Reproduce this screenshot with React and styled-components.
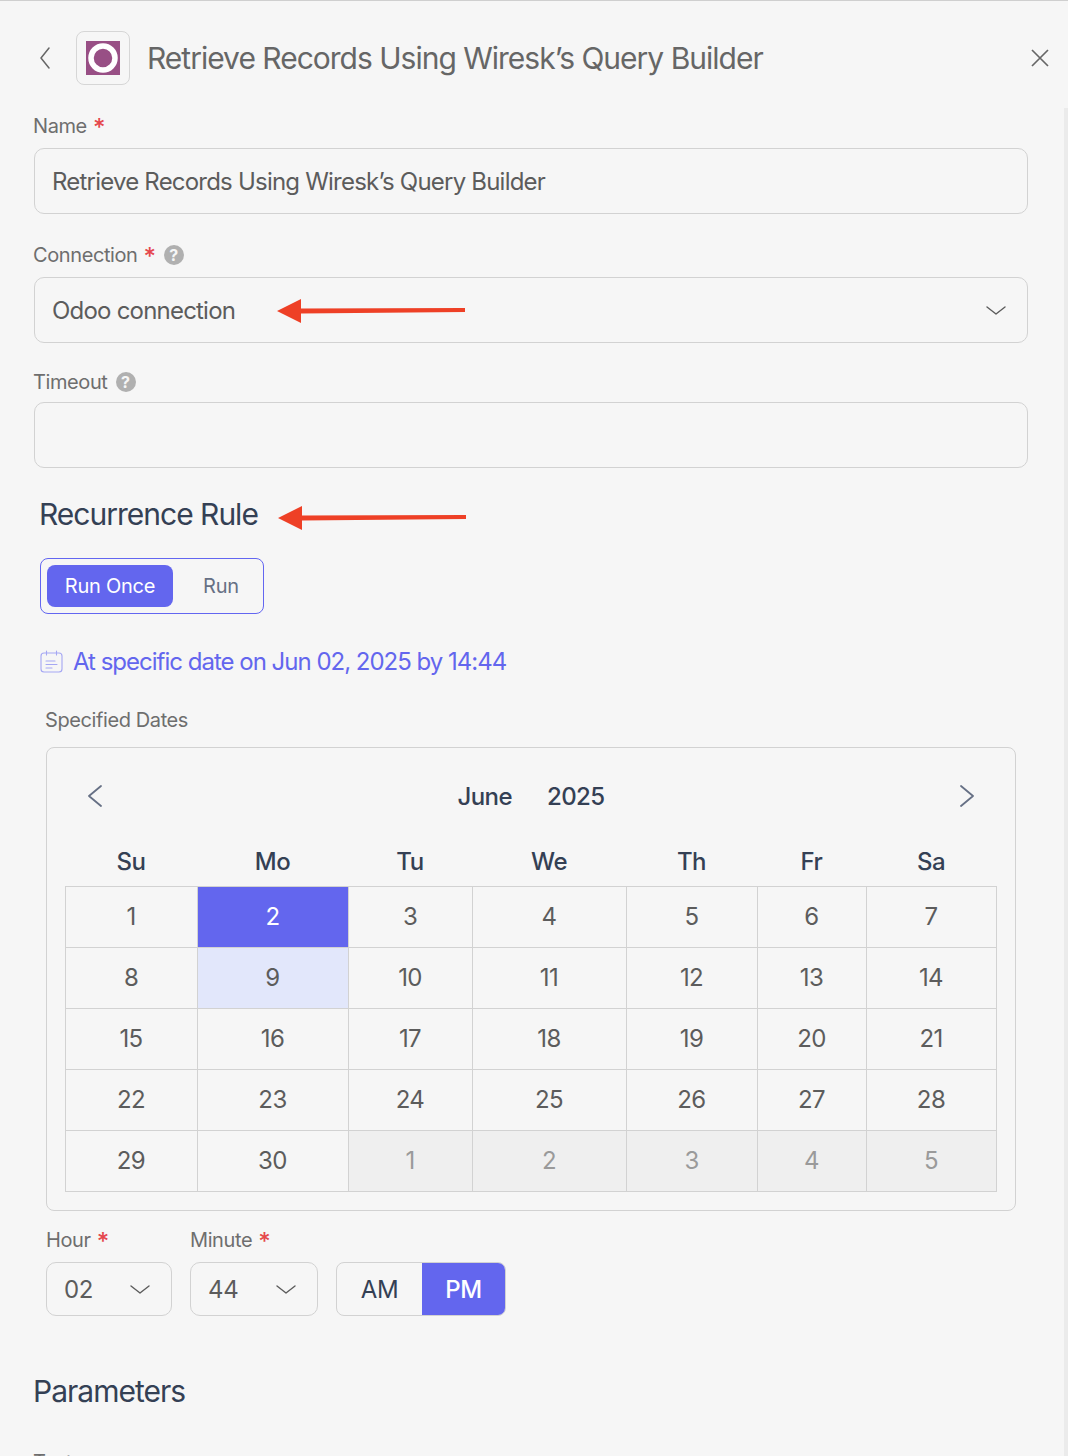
import React from "react";
import styled, { createGlobalStyle } from "styled-components";

const Global = createGlobalStyle`
  html, body { margin: 0; padding: 0; background: #f6f6f6; height: 100%; overflow: hidden; }
  * { box-sizing: border-box; }
  body { font-family: Inter, "Liberation Sans", sans-serif; color: #5c5c5c; }
`;

const Page = styled.div`
  position: relative;
  width: 1068px;
  height: 1456px;
  overflow: hidden;
  background: #f6f6f6;
  border-top: 1px solid #cfcfcf;
`;
const ScrollTrack = styled.div`
  position: absolute;
  right: 0;
  top: 107px;
  bottom: 0;
  width: 4px;
  background: #ebebeb;
`;
const Header = styled.header`
  display: flex;
  align-items: center;
  height: 54px;
  margin-top: 30px;
  padding: 0 19px 0 39px;
`;
const BackBtn = styled.button`
  display: flex;
  width: 16px;
  padding: 0;
  border: 0;
  background: none;
  color: #666;
`;
const LogoBox = styled.div`
  display: flex;
  align-items: center;
  justify-content: center;
  width: 54px;
  height: 54px;
  margin-left: 21px;
  border: 1px solid #d6d6d6;
  border-radius: 8px;
`;
const Title = styled.h1`
  flex: 1;
  margin: 0 0 0 17px;
  font-size: 30px;
  font-weight: 400;
  color: #666;
  letter-spacing: -1px;
  white-space: nowrap;
`;
const CloseBtn = styled.button`
  display: flex;
  padding: 0;
  border: 0;
  background: none;
  color: #666;
`;
const Form = styled.main`
  display: flex;
  flex-direction: column;
  padding: 0 40px 0 34px;
`;
const Label = styled.label`
  display: flex;
  align-items: center;
  height: 24px;
  margin-left: ${p => p.$left ?? -1}px;
  font-size: 20px;
  color: #6e6e6e;
  letter-spacing: -0.4px;
  margin-top: ${p => p.$top || 0}px;
  margin-bottom: ${p => p.$bottom || 0}px;
`;
const Star = styled.span`
  color: #e5484d;
  font-size: 24px;
  font-weight: 500;
  margin-left: 6px;
  line-height: 24px;
  position: relative;
  top: 2px;
`;
const Help = styled.span`
  display: inline-flex;
  align-items: center;
  justify-content: center;
  width: 20px;
  height: 20px;
  margin-left: 8px;
  border-radius: 50%;
  background: #b0b0b0;
  color: #f6f6f6;
  font-size: 16px;
  font-weight: 700;
  letter-spacing: 0;
`;
const Field = styled.div`
  display: flex;
  align-items: center;
  justify-content: space-between;
  height: 66px;
  padding: 0 20px 0 17px;
  border: 1px solid #d2d2d2;
  border-radius: 10px;
  font-size: 24px;
  color: #5c5c5c;
  letter-spacing: -0.79px;
`;
const SectionTitle = styled.h2`
  margin: ${p => p.$top}px 0 0 ${p => p.$left || 0}px;
  height: 38px;
  line-height: 38px;
  font-size: 30px;
  font-weight: 400;
  color: #344054;
  letter-spacing: -1px;
`;
const Toggle = styled.div`
  display: flex;
  align-items: center;
  width: 224px;
  height: 56px;
  margin: 25px 0 0 6px;
  padding: 0 0 0 6px;
  border: 1px solid #6366f1;
  border-radius: 8px;
`;
const ToggleOption = styled.div`
  display: flex;
  flex: none;
  align-items: center;
  justify-content: center;
  width: ${p => p.$w}px;
  height: 42px;
  border-radius: 8px;
  font-size: 20px;
  letter-spacing: -0.25px;
  color: ${p => (p.$active ? "#fff" : "#667085")};
  background: ${p => (p.$active ? "#6366ee" : "transparent")};
`;
const DateLine = styled.div`
  display: flex;
  align-items: center;
  gap: 10px;
  height: 30px;
  margin: 32px 0 0 6px;
  font-size: 24px;
  letter-spacing: -1px;
  color: #6366ee;
`;
const Indented = styled.div`
  margin-left: 12px;
`;
const CalendarBox = styled.section`
  width: 970px;
  height: 464px;
  padding: 0 18px;
  border: 1px solid #d2d2d2;
  border-radius: 8px;
`;
const CalNav = styled.div`
  display: flex;
  align-items: center;
  justify-content: space-between;
  height: 96px;
  padding: 0 22px;
`;
const NavBtn = styled.button`
  display: flex;
  padding: 0;
  border: 0;
  background: none;
  color: #667085;
`;
const Month = styled.div`
  display: flex;
  gap: 35px;
  font-size: 24px;
  font-weight: 500;
  color: #344054;
  letter-spacing: -0.6px;
`;
const DayHead = styled.div`
  display: grid;
  grid-template-columns: 132px 151px 124px 154px 131px 109px 130px;
  height: 42px;
  padding-bottom: 8px;
  align-items: center;
`;
const DayName = styled.div`
  text-align: center;
  font-size: 24px;
  font-weight: 500;
  color: #344054;
  letter-spacing: -0.5px;
`;
const DayGrid = styled.div`
  display: grid;
  grid-template-columns: 132px 151px 124px 154px 131px 109px 130px;
  grid-auto-rows: 61px;
  width: 932px;
  border-top: 1px solid #d2d2d2;
  border-left: 1px solid #d2d2d2;
`;
const Day = styled.div`
  display: flex;
  align-items: center;
  justify-content: center;
  padding: 0 1px 2px 0;
  border-right: 1px solid #d2d2d2;
  border-bottom: 1px solid #d2d2d2;
  font-size: 24px;
  letter-spacing: -0.6px;
  color: ${p => (p.$kind === "selected" ? "#fff" : p.$kind === "muted" ? "#9a9a9a" : "#5c5c5c")};
  background: ${p =>
    p.$kind === "selected" ? "#6366ee" : p.$kind === "range" ? "#e2e7fb" : p.$kind === "muted" ? "#efefef" : "transparent"};
`;
const TimeRow = styled.div`
  display: flex;
  align-items: flex-end;
  margin: 17px 0 0 12px;
`;
const TimeField = styled.div`
  display: flex;
  flex-direction: column;
  margin-right: 18px;
`;
const MiniSelect = styled.div`
  display: flex;
  align-items: center;
  justify-content: space-between;
  width: ${p => p.$w}px;
  height: 54px;
  margin-top: 10px;
  padding: 0 20px 0 17px;
  border: 1px solid #d2d2d2;
  border-radius: 10px;
  font-size: 24px;
  letter-spacing: -0.3px;
  color: #5c5c5c;
`;
const AmPm = styled.div`
  display: flex;
  height: 54px;
  border: 1px solid #d2d2d2;
  border-radius: 8px;
  overflow: hidden;
`;
const AmPmOption = styled.div`
  display: flex;
  align-items: center;
  justify-content: center;
  width: ${p => p.$w}px;
  font-size: 24px;
  letter-spacing: -0.4px;
  font-weight: ${p => (p.$active ? 500 : 400)};
  color: ${p => (p.$active ? "#fff" : "#344054")};
  background: ${p => (p.$active ? "#6366ee" : "transparent")};
`;
const ArrowMark = styled.svg`
  position: absolute;
  left: ${p => p.$x}px;
  top: ${p => p.$y}px;
`;

const ChevronDown = () => (
  <svg width="22" height="22" viewBox="0 0 22 22" fill="none" stroke="currentColor" strokeWidth="1.4" strokeLinecap="round" strokeLinejoin="round">
    <path d="M2 8l9 7 9-7" />
  </svg>
);
const ChevronSide = ({ dir, w = 16, h = 22, sw = 1.8 }) => {
  const mid = h / 2;
  const d =
    dir === "left"
      ? `M${w - 2} 1L2 ${mid}L${w - 2} ${h - 1}`
      : `M2 1L${w - 2} ${mid}L2 ${h - 1}`;
  return (
    <svg width={w} height={h} viewBox={`0 0 ${w} ${h}`} fill="none" stroke="currentColor" strokeWidth={sw} strokeLinecap="round" strokeLinejoin="round">
      <path d={d} />
    </svg>
  );
};

const Arrow = ({ x, y }) => (
  <ArrowMark $x={x} $y={y} width="192" height="28" viewBox="0 0 192 28">
    <path d="M0 14L24 2V11.5L188 11V15L24 16.5V26Z" fill="#ee4026" />
  </ArrowMark>
);

const weeks = [
  [1, 2, 3, 4, 5, 6, 7],
  [8, 9, 10, 11, 12, 13, 14],
  [15, 16, 17, 18, 19, 20, 21],
  [22, 23, 24, 25, 26, 27, 28],
  [29, 30, 1, 2, 3, 4, 5],
];
const dayKind = (w, i) => {
  if (w === 0 && i === 1) return "selected";
  if (w === 1 && i === 1) return "range";
  if (w === 4 && i > 1) return "muted";
  return undefined;
};

export default function App() {
  return (
    <Page>
      <Global />
      <ScrollTrack />
      <Header>
        <BackBtn><ChevronSide dir="left" w={12} h={22} sw={1.5} /></BackBtn>
        <LogoBox>
          <svg width="34" height="34" viewBox="0 0 34 34">
            <rect width="34" height="34" fill="#984f85" />
            <circle cx="17" cy="17" r="12" fill="none" stroke="#fff" strokeWidth="5.5" />
          </svg>
        </LogoBox>
        <Title>Retrieve Records Using Wiresk’s Query Builder</Title>
        <CloseBtn>
          <svg width="18" height="18" viewBox="0 0 18 18" fill="none" stroke="currentColor" strokeWidth="1.7">
            <path d="M1 1l16 16M17 1L1 17" />
          </svg>
        </CloseBtn>
      </Header>
      <Form>
        <Label $top={29} $bottom={10}>Name<Star>*</Star></Label>
        <Field>Retrieve Records Using Wiresk’s Query Builder</Field>
        <Label $top={29} $bottom={10}>Connection<Star>*</Star><Help>?</Help></Label>
        <Field>
          Odoo connection
          <ChevronDown />
        </Field>
        <Label $top={27} $bottom={8}>Timeout<Help>?</Help></Label>
        <Field />
        <SectionTitle $top={27} $left={5}>Recurrence Rule</SectionTitle>
        <Toggle>
          <ToggleOption $active $w={126}>Run Once</ToggleOption>
          <ToggleOption $w={96}>Run</ToggleOption>
        </Toggle>
        <DateLine>
          <svg width="23" height="23" viewBox="0 0 23 23" fill="none" stroke="#a5a7f3" strokeWidth="1.1" strokeLinecap="round">
            <rect x="1" y="3" width="21" height="19" rx="3" />
            <path d="M6.5 1v4M16.5 1v4M6 11h9M6 14.5h11M6 18h6" />
          </svg>
          At specific date on Jun 02, 2025 by 14:44
        </DateLine>
        <Indented>
          <Label $top={32} $bottom={15}>Specified Dates</Label>
          <CalendarBox>
            <CalNav>
              <NavBtn><ChevronSide dir="left" /></NavBtn>
              <Month><span>June</span><span>2025</span></Month>
              <NavBtn><ChevronSide dir="right" /></NavBtn>
            </CalNav>
            <DayHead>
              {["Su", "Mo", "Tu", "We", "Th", "Fr", "Sa"].map(d => <DayName key={d}>{d}</DayName>)}
            </DayHead>
            <DayGrid>
              {weeks.map((week, w) =>
                week.map((d, i) => <Day key={`${w}-${i}`} $kind={dayKind(w, i)}>{d}</Day>)
              )}
            </DayGrid>
          </CalendarBox>
        </Indented>
        <TimeRow>
          <TimeField>
            <Label $left={0}>Hour<Star>*</Star></Label>
            <MiniSelect $w={126}>02<ChevronDown /></MiniSelect>
          </TimeField>
          <TimeField>
            <Label $left={0}>Minute<Star>*</Star></Label>
            <MiniSelect $w={128}>44<ChevronDown /></MiniSelect>
          </TimeField>
          <AmPm>
            <AmPmOption $w={85}>AM</AmPmOption>
            <AmPmOption $active $w={83}>PM</AmPmOption>
          </AmPm>
        </TimeRow>
        <SectionTitle $top={56} $left={-1}>Parameters</SectionTitle>
        <Label $top={40}>Text</Label>
      </Form>
      <Arrow x={277} y={296} />
      <Arrow x={278} y={503} />
    </Page>
  );
}
